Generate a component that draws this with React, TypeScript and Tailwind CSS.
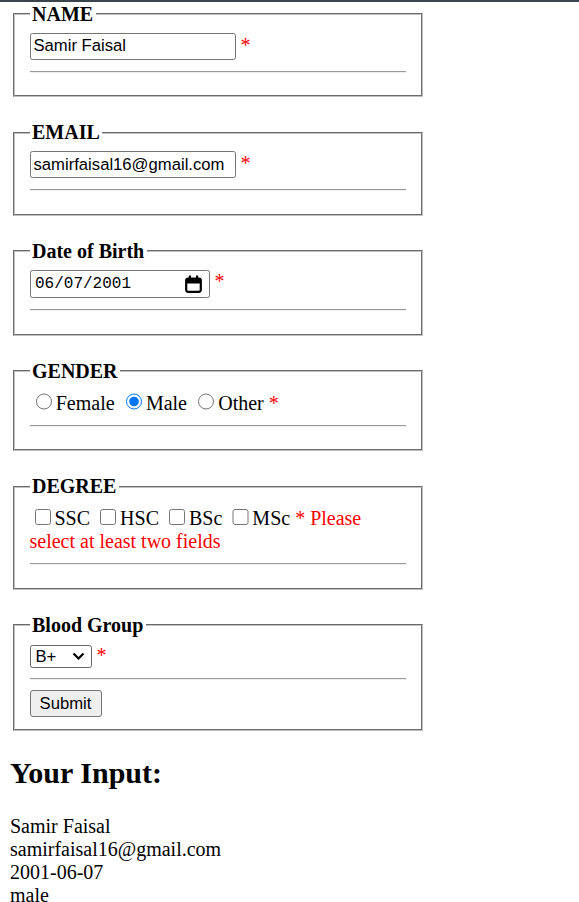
// Registration form preview: fieldsets for each field and the submitted values below.

const Star = () => <span className="text-[#ff0000]">*</span>;

/** Horizontal rule drawn like the browser's inset hr. */
const Rule = () => (
  <div className="my-[10px] h-[2px] border-t border-b border-t-[#9a9a9a] border-b-[#eeeeee]" />
);

interface BoxProps {
  legend: string;
  children: React.ReactNode;
}

function Box({ legend, children }: BoxProps) {
  return (
    <fieldset className="mx-[2.5px] w-[410px] border-[2.5px] border-[#c0c0c0] px-[15px] pt-[7px] pb-[12.5px] [border-style:groove]">
      <legend className="px-[2.5px] text-[20px] leading-[23px] font-bold">{legend}</legend>
      {children}
    </fieldset>
  );
}

const inputCls =
  "h-[27px] w-[206px] rounded-[2.5px] border border-[#767676] bg-white px-[3px] align-baseline font-['Liberation_Sans',Arial,sans-serif] text-[16.67px] text-black outline-none";

const radioCls = "mt-[3.75px] mr-[3.75px] mb-0 ml-[6.25px] h-[16.25px] w-[16.25px] align-baseline";
const checkCls = "my-[3.75px] mr-[3.75px] ml-[5px] h-[16.25px] w-[16.25px] align-baseline";

function CalendarIcon() {
  return (
    <svg width="17" height="18" viewBox="0 0 17 18" className="shrink-0">
      <rect x="1.2" y="3.6" width="14.6" height="13.2" rx="2" fill="none" stroke="#000" strokeWidth="2.2" />
      <rect x="1.2" y="3.6" width="14.6" height="5" rx="1.5" fill="#000" />
      <rect x="3.8" y="0.5" width="2.2" height="4" fill="#000" />
      <rect x="11" y="0.5" width="2.2" height="4" fill="#000" />
    </svg>
  );
}

export default function App() {
  const degrees = ['SSC', 'HSC', 'BSc', 'MSc'];

  return (
    <div className="h-[902px] overflow-hidden bg-white font-['Liberation_Serif','Times_New_Roman',serif] text-[20px] leading-[23px] text-black">
      <div className="h-[2px] bg-[#3a444d]" />
      <div className="px-[10px] pt-[0.5px]">
        <form className="flex flex-col gap-[24px]" onSubmit={(e) => e.preventDefault()}>
          <Box legend="NAME">
            <div className="pb-[1px]">
              <input type="text" readOnly value="Samir Faisal" className={inputCls} /> <Star />
            </div>
            <Rule />
          </Box>

          <Box legend="EMAIL">
            <div className="pb-[1px]">
              <input type="email" readOnly value="samirfaisal16@gmail.com" className={inputCls} /> <Star />
            </div>
            <Rule />
          </Box>

          <Box legend="Date of Birth">
            <div className="pb-[1px]">
              <span className="inline-flex h-[28px] w-[180px] items-center justify-between rounded-[2.5px] border border-[#767676] pr-[7px] pl-[4.5px] align-baseline font-['Liberation_Mono',monospace] text-[16px]">
                <span>06/07/2001</span>
                <CalendarIcon />
              </span>{' '}
              <Star />
            </div>
            <Rule />
          </Box>

          <Box legend="GENDER">
            <div>
              <input type="radio" name="gender" readOnly className={radioCls} />
              Female{' '}
              <input type="radio" name="gender" readOnly checked className={radioCls} />
              Male{' '}
              <input type="radio" name="gender" readOnly className={radioCls} />
              Other <Star />
            </div>
            <Rule />
          </Box>

          <Box legend="DEGREE">
            <div>
              {degrees.map((d) => (
                <span key={d}>
                  <input type="checkbox" readOnly className={checkCls} />
                  {d}{' '}
                </span>
              ))}
              <span className="text-[#ff0000]">* Please select at least two fields</span>
            </div>
            <Rule />
          </Box>

          <Box legend="Blood Group">
            <div>
              <span className="inline-flex h-[23px] w-[62px] items-center justify-between rounded-[2.5px] border border-[#666666] pr-[6px] pl-[5px] align-baseline font-['Liberation_Sans',Arial,sans-serif] text-[16.67px] leading-[19px]">
                <span>B+</span>
                <svg width="13" height="9" viewBox="0 0 13 9">
                  <polyline points="1.5,1.5 6.5,6.5 11.5,1.5" fill="none" stroke="#000" strokeWidth="2.2" />
                </svg>
              </span>{' '}
              <Star />
            </div>
            <Rule />
            <button
              type="submit"
              className="h-[27px] w-[72px] rounded-[3px] border border-[#767676] bg-[#efefef] font-['Liberation_Sans',Arial,sans-serif] text-[16.67px] text-black"
            >
              Submit
            </button>
          </Box>
        </form>

        <h2 className="mt-[25px] mb-[25px] text-[30px] leading-[34px] font-bold">Your Input:</h2>
        <div>
          <div>Samir Faisal</div>
          <div>samirfaisal16@gmail.com</div>
          <div>2001-06-07</div>
          <div>male</div>
          <div>SSC, HSC</div>
          <div>B+</div>
        </div>
      </div>
    </div>
  );
}
